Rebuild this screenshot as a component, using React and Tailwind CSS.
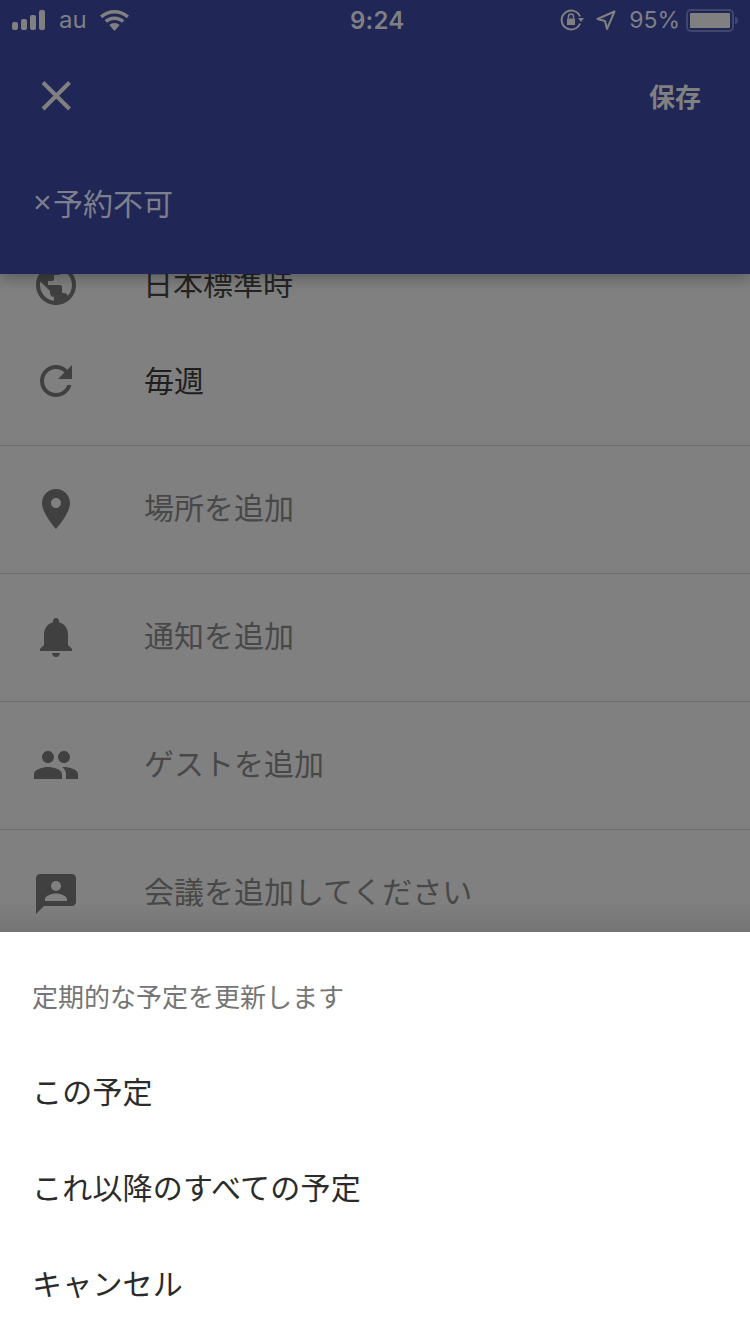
import React from "react";

const cjk = "font-['Noto_Sans_CJK_JP',sans-serif]";

function StatusBar() {
  return (
    <div className="relative flex h-10 items-center justify-between pl-3 pr-3 text-[#7f7f85] font-['Inter',sans-serif]">
      <div className="flex items-center">
        <svg width="34" height="20" viewBox="0 0 34 20" fill="#808080">
          <rect x="0" y="12" width="6" height="8" rx="2" />
          <rect x="9" y="9" width="6" height="11" rx="2" />
          <rect x="18" y="5" width="6" height="15" rx="2" />
          <rect x="27" y="0" width="6" height="20" rx="2" />
        </svg>
        <span className="ml-[13px] text-[24px] leading-none">au</span>
        <svg className="ml-[13px]" width="29" height="21" viewBox="0 0 29 21" fill="#808080">
          <path d="M14.5 0C9 0 4 2 0 5.6l2.2 2.6C5.600 5.200 9.900 3.400 14.500 3.400s8.900 1.800 12.300 4.800L29 5.600C25 2 20 0 14.500 0z" />
          <path d="M14.500 6.500c-3.700 0-7.100 1.300-9.800 3.700l2.200 2.600c2.100-1.800 4.700-2.900 7.600-2.900s5.500 1.100 7.600 2.900l2.200-2.600c-2.700-2.400-6.100-3.700-9.800-3.700z" />
          <path d="M14.500 13c-2 0-3.800.7-5.200 2l5.200 6 5.200-6c-1.400-1.300-3.200-2-5.200-2z" />
        </svg>
      </div>
      <span className="absolute left-[350px] top-[5px] text-[24px] leading-[32px] font-semibold tracking-[0.2px]">9:24</span>
      <div className="flex items-center">
        <svg width="24" height="22" viewBox="0 0 24 22" fill="none" stroke="#808080" strokeWidth="2">
          <path d="M20 7.500A9.500 9.500 0 1 0 20 14.500" />
          <path d="M18 9h6l-3 4z" fill="#808080" stroke="none" />
          <rect x="7" y="9.500" width="8" height="6.500" fill="#808080" stroke="none" />
          <path d="M8.500 9.500V7.500a2.500 2.500 0 0 1 5 0v2" strokeWidth="1.500" />
        </svg>
        <svg className="ml-[12px]" width="20" height="20" viewBox="0 0 20 20" fill="none" stroke="#808080" strokeWidth="2" strokeLinejoin="round">
          <path d="M18.500 1.500L1.500 9l7.500 2 2 8z" />
        </svg>
        <span className="ml-[13px] text-[23px] leading-none">95%</span>
        <div className="ml-[6px] flex h-[23px] w-[48px] items-center rounded-[5px] border-2 border-[#40466c] p-[2px]">
          <div className="h-full w-full rounded-[1px] bg-[#808080]" />
        </div>
        <div className="ml-[1px] h-[7px] w-[3px] rounded-r-sm bg-[#40466c]" />
      </div>
    </div>
  );
}

function Header() {
  return (
    <header className="relative z-10 h-[274px] shrink-0 bg-[#202756] shadow-[0_4px_14px_rgba(0,0,0,0.3)]">
      <StatusBar />
      <div className={`flex h-[112px] items-center justify-between pl-[36px] pr-[49px] ${cjk}`}>
        <svg width="40" height="40" viewBox="0 0 40 40" stroke="#808080" strokeWidth="4">
          <path d="M7 6.500L33.500 33M33.500 6.500L7 33" />
        </svg>
        <span className="text-[26px] font-bold leading-none text-[#808080]">保存</span>
      </div>
      <div className={`flex pl-[33px] pt-[28px] text-[30px] leading-[44px] text-[#7d7f8c] ${cjk}`}>
        <span className="w-[20px] font-['Liberation_Sans',sans-serif] text-[32px]">×</span>
        <span>予約不可</span>
      </div>
    </header>
  );
}

function GlobeIcon() {
  return (
    <svg width="48" height="48" viewBox="0 0 24 24" fill="#404040">
      <path d="M12 2C6.480 2 2 6.480 2 12s4.480 10 10 10 10-4.480 10-10S17.520 2 12 2zm-1 17.930c-3.950-.49-7-3.850-7-7.930 0-.62.080-1.210.21-1.790L9 15v1c0 1.100.9 2 2 2v1.930zm6.900-2.540c-.26-.81-1-1.390-1.900-1.390h-1v-3c0-.55-.45-1-1-1H8v-2h2c.55 0 1-.45 1-1V7h2c1.100 0 2-.9 2-2v-.41c2.930 1.190 5 4.060 5 7.410 0 2.080-.8 3.970-2.100 5.390z" />
    </svg>
  );
}

function RefreshIcon() {
  return (
    <svg width="48" height="48" viewBox="0 0 24 24" fill="#404040">
      <path d="M17.650 6.350C16.200 4.900 14.210 4 12 4c-4.420 0-7.990 3.580-7.990 8s3.570 8 7.990 8c3.730 0 6.840-2.550 7.730-6h-2.080c-.82 2.330-3.040 4-5.650 4-3.310 0-6-2.690-6-6s2.690-6 6-6c1.660 0 3.140.69 4.220 1.780L13 11h7V4l-2.350 2.350z" />
    </svg>
  );
}

function PlaceIcon() {
  return (
    <svg width="48" height="48" viewBox="0 0 24 24" fill="#404040">
      <path d="M12 2C8.130 2 5 5.130 5 9c0 5.250 7 13 7 13s7-7.750 7-13c0-3.870-3.130-7-7-7zm0 9.500c-1.380 0-2.500-1.120-2.500-2.500s1.120-2.500 2.500-2.500 2.500 1.120 2.500 2.500-1.120 2.500-2.500 2.500z" />
    </svg>
  );
}

function BellIcon() {
  return (
    <svg width="48" height="48" viewBox="0 0 24 24" fill="#404040">
      <path d="M12 22c1.100 0 2-.9 2-2h-4c0 1.100.9 2 2 2zm6-6v-5c0-3.070-1.630-5.640-4.500-6.320V4c0-.83-.67-1.500-1.500-1.500s-1.500.67-1.500 1.500v.68C7.640 5.360 6 7.920 6 11v5l-2 2v1h16v-1l-2-2z" />
    </svg>
  );
}

function PeopleIcon() {
  return (
    <svg width="48" height="48" viewBox="0 0 24 24" fill="#404040">
      <path d="M16 11c1.660 0 2.990-1.340 2.990-3S17.660 5 16 5c-1.660 0-3 1.340-3 3s1.340 3 3 3zm-8 0c1.660 0 2.990-1.340 2.990-3S9.660 5 8 5C6.340 5 5 6.340 5 8s1.340 3 3 3zm0 2c-2.330 0-7 1.170-7 3.500V19h14v-2.500c0-2.330-4.670-3.500-7-3.500zm8 0c-.29 0-.62.020-.97.050 1.160.84 1.970 1.970 1.970 3.450V19h6v-2.500c0-2.330-4.670-3.500-7-3.500z" />
    </svg>
  );
}

function MeetIcon() {
  return (
    <svg className="mt-[2px]" width="48" height="48" viewBox="0 0 24 24" fill="#404040">
      <path fillRule="evenodd" d="M4 2h16c1.100 0 2 .9 2 2v12c0 1.100-.9 2-2 2H6l-4 4V4c0-1.100.9-2 2-2zm8 3.500a2.500 2.500 0 1 0 0 5 2.500 2.500 0 0 0 0-5zM6.500 15.500h11v-1c0-1.800-3.700-2.800-5.500-2.800s-5.500 1-5.500 2.800v1z" />
    </svg>
  );
}

const addRows = [
  { icon: <PlaceIcon />, label: "場所を追加" },
  { icon: <BellIcon />, label: "通知を追加" },
  { icon: <PeopleIcon />, label: "ゲストを追加" },
  { icon: <MeetIcon />, label: "会議を追加してください" },
];

function EventList() {
  return (
    <main className={`relative min-h-0 flex-1 overflow-hidden ${cjk}`}>
      <div className="-mt-[37px]">
        <div className="flex h-[96px] items-center pl-[32px] text-[30px] text-[#242424]">
          <GlobeIcon />
          <span className="ml-[63px] pb-[5px]">日本標準時</span>
        </div>
        <div className="flex h-[96px] items-center pl-[32px] text-[30px] text-[#1f1f1f]">
          <RefreshIcon />
          <span className="ml-[64px] pb-[4px]">毎週</span>
        </div>
        <div className="h-[17px] border-b border-[#6e6e6e]" />
        {addRows.map((row) => (
          <div
            key={row.label}
            className="flex h-[128px] items-center border-b border-[#6e6e6e] pb-[1px] pl-[32px] text-[30px] text-[#484848]"
          >
            {row.icon}
            <span className="ml-[64px] pb-[5px]">{row.label}</span>
          </div>
        ))}
      </div>
      <div className="absolute inset-x-0 bottom-0 h-[30px] bg-gradient-to-t from-[#00000018] to-transparent" />
    </main>
  );
}

function ActionSheet() {
  return (
    <section className={`h-[402px] shrink-0 bg-white pl-[32px] ${cjk}`}>
      <div className="pt-[42px] text-[26px] leading-[44px] text-[#757575]">定期的な予定を更新します</div>
      <div className="mt-[24px] flex flex-col text-[30px] tracking-[0.2px] text-[#2b2b2b]">
        <div className="flex h-[96px] items-center">この予定</div>
        <div className="flex h-[96px] items-center">これ以降のすべての予定</div>
        <div className="flex h-[96px] items-center">キャンセル</div>
      </div>
    </section>
  );
}

export default function App() {
  return (
    <div className="flex h-[1334px] w-[750px] flex-col overflow-hidden bg-[#808080]">
      <Header />
      <EventList />
      <ActionSheet />
    </div>
  );
}
